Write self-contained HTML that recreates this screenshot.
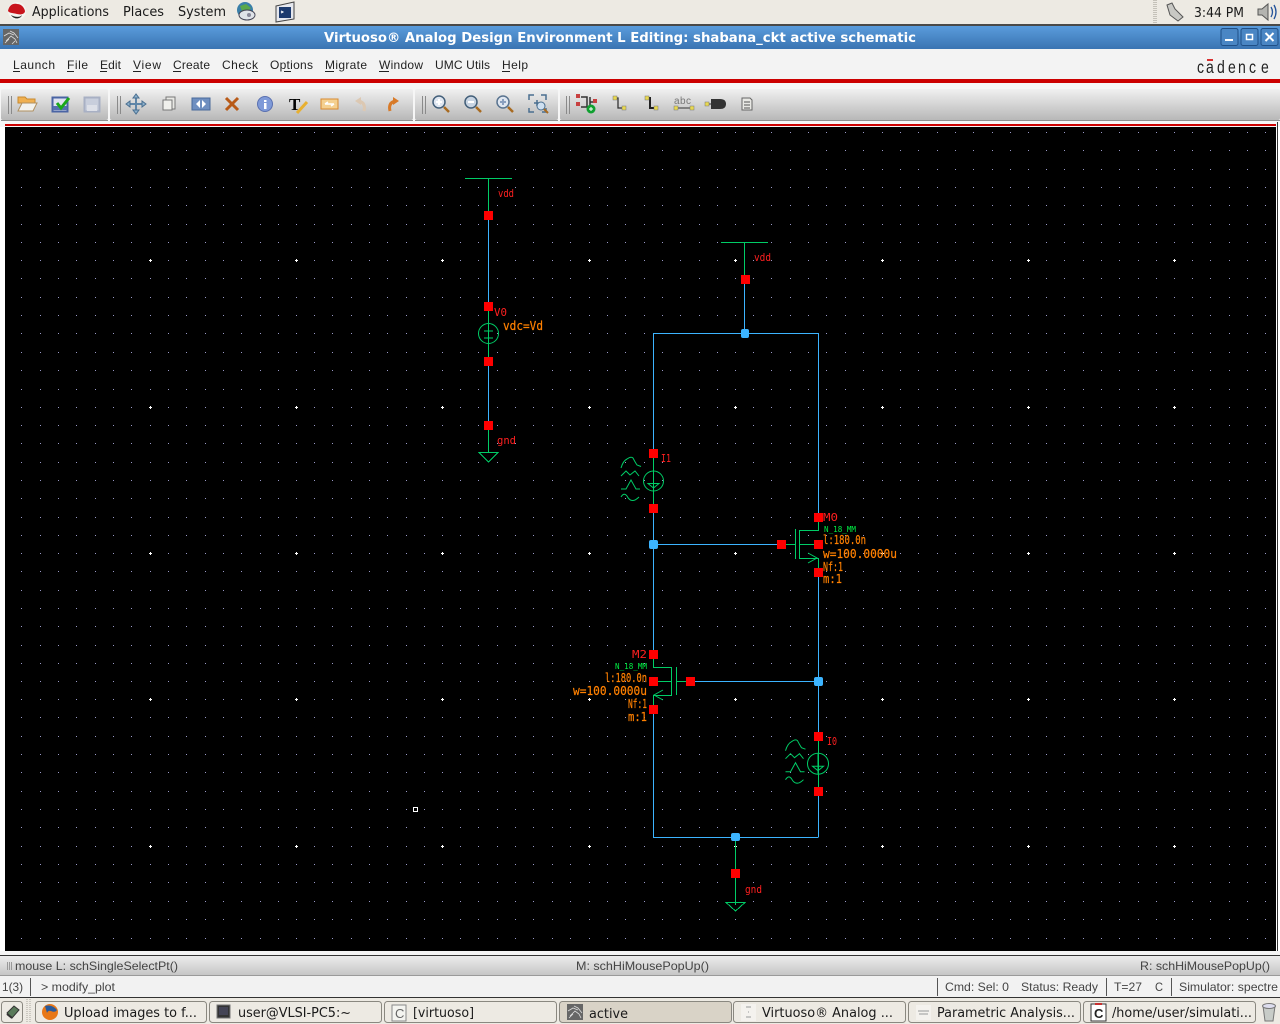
<!DOCTYPE html>
<html><head><meta charset="utf-8"><title>Virtuoso</title>
<style>
html,body{margin:0;padding:0;background:#fff;width:1280px;height:1024px;overflow:hidden}
svg{display:block}
.ui{font-family:"DejaVu Sans",sans-serif;font-size:13px;fill:#1a1a1a}
.mn{font-family:"Liberation Sans",sans-serif;font-size:12px;fill:#222}
.st{font-family:"Liberation Sans",sans-serif;font-size:12px;fill:#444}
.v{font-family:"DejaVu Sans Mono",monospace;font-size:11px}
.r{fill:#ff2020}.o{fill:#ff8000;font-size:12px;stroke:#ff8000;stroke-width:.2}.g{fill:#00ee44}
.w{stroke:#3cb4ff;fill:none;stroke-width:1}
.n{stroke:#00cc66;fill:none;stroke-width:1}
.tb{fill:url(#tbg)}
.btn{fill:#edeae3;stroke:#8a8880;stroke-width:1}
</style></head><body>
<svg width="1280" height="1024" viewBox="0 0 1280 1024" xmlns="http://www.w3.org/2000/svg">
<defs>
<linearGradient id="tt" x1="0" y1="0" x2="0" y2="1"><stop offset="0" stop-color="#5a9cdc"/><stop offset="1" stop-color="#3a74b2"/></linearGradient>
<linearGradient id="tbg" x1="0" y1="0" x2="0" y2="1"><stop offset="0" stop-color="#f0f0f0"/><stop offset="1" stop-color="#b8b8b8"/></linearGradient>
<linearGradient id="sbg" x1="0" y1="0" x2="0" y2="1"><stop offset="0" stop-color="#ececec"/><stop offset="1" stop-color="#c4c4c4"/></linearGradient>
<clipPath id="cols"><path d="M21 127h1v824h-1zM40 127h1v824h-1zM58 127h1v824h-1zM76 127h1v824h-1zM95 127h1v824h-1zM113 127h1v824h-1zM131 127h1v824h-1zM150 127h1v824h-1zM168 127h1v824h-1zM186 127h1v824h-1zM205 127h1v824h-1zM223 127h1v824h-1zM241 127h1v824h-1zM260 127h1v824h-1zM278 127h1v824h-1zM296 127h1v824h-1zM314 127h1v824h-1zM332 127h1v824h-1zM351 127h1v824h-1zM369 127h1v824h-1zM387 127h1v824h-1zM406 127h1v824h-1zM424 127h1v824h-1zM442 127h1v824h-1zM460 127h1v824h-1zM478 127h1v824h-1zM497 127h1v824h-1zM515 127h1v824h-1zM533 127h1v824h-1zM552 127h1v824h-1zM570 127h1v824h-1zM589 127h1v824h-1zM607 127h1v824h-1zM625 127h1v824h-1zM644 127h1v824h-1zM662 127h1v824h-1zM680 127h1v824h-1zM699 127h1v824h-1zM717 127h1v824h-1zM735 127h1v824h-1zM753 127h1v824h-1zM771 127h1v824h-1zM790 127h1v824h-1zM808 127h1v824h-1zM826 127h1v824h-1zM845 127h1v824h-1zM863 127h1v824h-1zM882 127h1v824h-1zM900 127h1v824h-1zM918 127h1v824h-1zM937 127h1v824h-1zM955 127h1v824h-1zM973 127h1v824h-1zM992 127h1v824h-1zM1010 127h1v824h-1zM1028 127h1v824h-1zM1046 127h1v824h-1zM1064 127h1v824h-1zM1083 127h1v824h-1zM1101 127h1v824h-1zM1119 127h1v824h-1zM1138 127h1v824h-1zM1156 127h1v824h-1zM1174 127h1v824h-1zM1192 127h1v824h-1zM1210 127h1v824h-1zM1229 127h1v824h-1zM1247 127h1v824h-1zM1265 127h1v824h-1z"/></clipPath>
<clipPath id="majc"><path d="M149 127h3v824h-3zM295 127h3v824h-3zM441 127h3v824h-3zM588 127h3v824h-3zM734 127h3v824h-3zM881 127h3v824h-3zM1027 127h3v824h-3zM1173 127h3v824h-3z"/></clipPath>
<clipPath id="majr"><path d="M5 259h1271v3H5zM5 406h1271v3H5zM5 552h1271v3H5zM5 698h1271v3H5zM5 845h1271v3H5z"/></clipPath>
</defs>

<!-- top panel -->
<rect width="1280" height="24" fill="#edeae3"/>
<rect y="24" width="1280" height="2" fill="#4a4a48"/>
<circle cx="17" cy="11" r="9" fill="#f4f4f0"/>
<path d="M8 11C9 6 12 3 17 4C21 4 24 7 25 11C25 14 21 15 17 14C13 13 9 13 8 11Z" fill="#c8141c"/>
<path d="M11 15C14 17 20 18 22 15C21 19 14 20 11 15Z" fill="#222"/>
<text class="ui" x="32" y="16" textLength="77" lengthAdjust="spacingAndGlyphs">Applications</text>
<text class="ui" x="123" y="16" textLength="41" lengthAdjust="spacingAndGlyphs">Places</text>
<text class="ui" x="178" y="16" textLength="48" lengthAdjust="spacingAndGlyphs">System</text>
<circle cx="245" cy="10" r="8" fill="#3a7fa8"/><path d="M240 6l6-2 5 4-4 4-5-1z" fill="#5aa84a"/>
<ellipse cx="247" cy="15" rx="8" ry="5" fill="#dfe3e8" stroke="#445" stroke-width="1"/><circle cx="249" cy="15" r="2" fill="#889"/>
<path d="M276 6L294 2V19L276 22Z" fill="#e6e8ee" stroke="#444"/><rect x="279" y="7" width="12" height="11" fill="#1c3a6e"/><path d="M281 11l2 1-2 1" stroke="#fff" fill="none"/>
<path d="M1154 0V24M1156 0V24" stroke="#9a988f" stroke-dasharray="1 1"/>
<path d="M1167 5L1172 3L1175 9L1183 17L1178 21L1170 15Z" fill="#c8c8c4" stroke="#555"/>
<text class="ui" x="1194" y="17" textLength="50" lengthAdjust="spacingAndGlyphs">3:44 PM</text>
<path d="M1258 9H1262L1268 4V20L1262 15H1258Z" fill="#b4b4b0" stroke="#555"/>
<path d="M1271 7Q1274 12 1271 17M1274 5Q1278 12 1274 19" stroke="#24539a" fill="none" stroke-width="1.3"/>

<!-- title bar -->
<rect y="26" width="1280" height="23" fill="url(#tt)"/>
<rect x="3" y="29" width="16" height="16" fill="#666"/>
<path d="M4 36L9 33L14 35M6 41L11 36L15 39L17 43M5 43L9 39M10 31L14 33L18 38M12 44L15 41" stroke="#ddd" fill="none" stroke-width=".8"/>
<text x="324" y="42" font-family="DejaVu Sans,sans-serif" font-weight="bold" font-size="13" fill="#fff" textLength="592" lengthAdjust="spacingAndGlyphs">Virtuoso® Analog Design Environment L Editing: shabana_ckt active schematic</text>
<g fill="#4a86c4" stroke="#1f4f86"><rect x="1221" y="28.5" width="17" height="17" rx="2"/><rect x="1241" y="28.5" width="17" height="17" rx="2"/><rect x="1261" y="28.5" width="17" height="17" rx="2"/></g>
<rect x="1225" y="39" width="8" height="2" fill="#fff"/>
<rect x="1246.5" y="34.5" width="6" height="5" fill="none" stroke="#fff" stroke-width="1.5"/>
<path d="M1265.5 33L1273.5 41M1273.5 33L1265.5 41" stroke="#fff" stroke-width="2"/>

<!-- menu bar -->
<rect y="49" width="1280" height="30" fill="#f3f3f3"/>
<rect y="79" width="1280" height="4" fill="#cc0000"/>
<rect y="83" width="1280" height="44" fill="#f6f6f6"/>
<text class="mn" x="13" y="69" textLength="42">Launch</text>
<text class="mn" x="67" y="69" textLength="21">File</text>
<text class="mn" x="100" y="69" textLength="21">Edit</text>
<text class="mn" x="133" y="69" textLength="28">View</text>
<text class="mn" x="173" y="69" textLength="37">Create</text>
<text class="mn" x="222" y="69" textLength="36">Check</text>
<text class="mn" x="270" y="69" textLength="43">Options</text>
<text class="mn" x="325" y="69" textLength="42">Migrate</text>
<text class="mn" x="379" y="69" textLength="44">Window</text>
<text class="mn" x="435" y="69" textLength="55">UMC Utils</text>
<text class="mn" x="502" y="69" textLength="26">Help</text>
<path d="M13 71.5h7M67 71.5h7M100 71.5h7M133 71.5h8M173 71.5h8M252 71.5h6M284 71.5h7M325 71.5h9M379 71.5h10M502 71.5h8" stroke="#222"/>
<text transform="translate(1197,73) scale(.78,1)" x="0 11.5 25.6 39.7 52.6 66.7 82" y="0" font-family="Liberation Sans,sans-serif" font-size="18" fill="#222">cadence</text>
<rect x="1207" y="59" width="6" height="2" fill="#d83030"/>

<!-- toolbar -->
<rect x="1" y="89" width="107" height="31" rx="2" class="tb"/>
<rect x="110" y="89" width="303" height="31" rx="2" class="tb"/>
<rect x="415" y="89" width="143" height="31" rx="2" class="tb"/>
<rect x="560" y="89" width="720" height="31" rx="2" class="tb"/>
<path d="M1 120.500H108M110 120.500H413M415 120.500H558M560 120.500H1280" stroke="#8e8e8e"/>
<path d="M8.5 96V114M11.5 96V114M117.5 96V114M120.5 96V114M422.5 96V114M425.500 96V114M566.500 96V114M569.500 96V114" stroke="#8a8a8a"/>

<!-- toolbar icons -->
<path d="M18 97H25L27 99H35V103H18Z" fill="#f0b050" stroke="#c88a30"/><path d="M18 111L22 103H37L33 111Z" fill="#f2f2ee" stroke="#b09060"/>
<rect x="52.500" y="97.500" width="15" height="14" fill="#dfe2f0" stroke="#4a64a4" stroke-width="2"/><path d="M53 108h14" stroke="#5570b0" stroke-width="4"/><path d="M57 103L61 108L69 98" stroke="#1aa81a" stroke-width="3" fill="none"/>
<rect x="84.500" y="97.500" width="15" height="14" fill="#c8cedc" stroke="#a8b0c4" stroke-width="2"/><rect x="87" y="105" width="10" height="6" fill="#dde0e8"/>
<path d="M136 95V113M127 104H145" stroke="#5f86a8" stroke-width="2"/><path d="M136 94l-3 4h6zM136 114l-3-4h6zM126 104l4-3v6zM146 104l-4-3v6z" fill="#8cb0cc" stroke="#4a6f90"/>
<rect x="166" y="97" width="9" height="12" fill="#e8e8e4" stroke="#777"/><rect x="163" y="100" width="9" height="10" fill="#f0f0ec" stroke="#777"/>
<rect x="192" y="98" width="18" height="12" fill="#6f8fc0" stroke="#4a6a9a"/><path d="M200 100l-4 4 4 4zM202 100l4 4-4 4z" fill="#fff"/>
<path d="M226 98L238 110M238 98L226 110" stroke="#b85a18" stroke-width="3"/>
<circle cx="265" cy="104" r="7.5" fill="#7f9ad8" stroke="#5a70b0"/><rect x="264" y="103" width="2.5" height="6" fill="#fff"/><rect x="264" y="100" width="2.5" height="2" fill="#fff"/>
<text x="289" y="110" font-family="Liberation Serif,serif" font-weight="bold" font-size="17" fill="#000">T</text><path d="M297 113L307 102" stroke="#e8b030" stroke-width="3"/>
<rect x="321" y="99" width="17" height="10" fill="#f4d090" stroke="#d88a30"/><path d="M325 104h9M325 104l3-2M334 104l-3 2" stroke="#fff" stroke-width="1.5" fill="none"/>
<path d="M364 111Q366 103 359 101" stroke="#dcc8b2" stroke-width="3" fill="none"/><path d="M361 97L355 101L361 105Z" fill="#dcc8b2"/>
<path d="M390 111Q388 103 395 101" stroke="#d87a28" stroke-width="3" fill="none"/><path d="M393 97L399 101L393 105Z" fill="#d87a28"/>
<g><circle cx="439" cy="102" r="6" fill="#dfe6f0" stroke="#44607a" stroke-width="1.5"/><path d="M436 102h6M439 99v6" stroke="#fff" stroke-width="2"/><path d="M444 107L449 112" stroke="#a86a20" stroke-width="2.5"/></g>
<g><circle cx="471" cy="102" r="6" fill="#c8d4e2" stroke="#44607a" stroke-width="1.5"/><path d="M468 102h6" stroke="#fff" stroke-width="2"/><path d="M476 107L481 112" stroke="#a86a20" stroke-width="2.5"/></g>
<g><circle cx="503" cy="102" r="6" fill="#dfe6f0" stroke="#5a7490" stroke-width="1.5"/><path d="M500 102h6M503 99v6" stroke="#8aa0c0" stroke-width="2"/><path d="M508 107L513 112" stroke="#a86a20" stroke-width="2.5"/></g>
<g fill="none" stroke="#4a6f90" stroke-width="1.5"><path d="M529 100V95H534M541 95H546V100M546 108V112H542M534 112H529V108M537 100V106M534 103H540"/></g><circle cx="541" cy="106" r="4" fill="#cfe0f0" stroke="#4a6f90"/><path d="M544 109L548 113" stroke="#a86a20" stroke-width="2"/>
<path d="M581 97H587V107H581M590 97V107M590 102H596" stroke="#333" stroke-width="1.5" fill="none"/><rect x="576" y="94" width="4" height="4" fill="#c84040"/><rect x="576" y="102" width="4" height="4" fill="#c84040"/><rect x="593" y="99" width="4" height="4" fill="#c84040"/><circle cx="591" cy="109" r="4.5" fill="#10a030"/><path d="M589 109h4M591 107v4" stroke="#fff"/>
<path d="M615 98H618V108H623" stroke="#333" fill="none" stroke-width="1.3"/><rect x="613" y="96" width="4" height="4" fill="#e8d850" stroke="#777" stroke-width=".5"/><rect x="622" y="106" width="4" height="4" fill="#e8d850" stroke="#777" stroke-width=".5"/>
<path d="M647 98H650V108H656" stroke="#222" fill="none" stroke-width="2"/><rect x="645" y="96" width="4" height="4" fill="#e8d850" stroke="#777" stroke-width=".5"/><rect x="654" y="106" width="4" height="4" fill="#e8d850" stroke="#777" stroke-width=".5"/>
<text x="674" y="104" font-family="Liberation Sans,sans-serif" font-size="10" fill="#777" textLength="17">abc</text><path d="M676 108H692" stroke="#333"/><rect x="674" y="106" width="4" height="4" fill="#e8d850" stroke="#777" stroke-width=".5"/><rect x="690" y="106" width="4" height="4" fill="#e8d850" stroke="#777" stroke-width=".5"/>
<path d="M711 99H720Q726 99 726 104Q726 109 720 109H711Z" fill="#333"/><path d="M706 104H712" stroke="#333"/><rect x="705" y="102" width="4" height="4" fill="#e8d850" stroke="#777" stroke-width=".5"/>
<path d="M742 98H750L752 100V110H742Z" fill="#e8e8e4" stroke="#666"/><path d="M744 102h6M744 105h6M744 108h6" stroke="#555"/>

<!-- canvas -->
<rect x="5" y="124" width="1271" height="2" fill="#cc0000"/>
<rect x="5" y="127" width="1271" height="824" fill="#000"/>
<rect x="1277" y="122" width="1" height="830" fill="#333"/>

<!-- grid -->
<path clip-path="url(#cols)" stroke="#9a9ac8" fill="none" d="M5 132.500H1276M5 150.500H1276M5 169.500H1276M5 187.500H1276M5 205.500H1276M5 224.500H1276M5 242.500H1276M5 260.500H1276M5 278.500H1276M5 297.500H1276M5 315.500H1276M5 333.500H1276M5 352.500H1276M5 370.500H1276M5 389.500H1276M5 407.500H1276M5 425.500H1276M5 443.500H1276M5 462.500H1276M5 480.500H1276M5 498.500H1276M5 517.500H1276M5 535.500H1276M5 553.500H1276M5 571.500H1276M5 590.500H1276M5 608.500H1276M5 626.500H1276M5 645.500H1276M5 663.500H1276M5 681.500H1276M5 699.500H1276M5 717.500H1276M5 736.500H1276M5 754.500H1276M5 772.500H1276M5 791.500H1276M5 809.500H1276M5 827.500H1276M5 846.500H1276M5 864.500H1276M5 882.500H1276M5 901.500H1276M5 919.500H1276M5 938.500H1276"/>
<path clip-path="url(#majc)" stroke="#fff" fill="none" d="M5 260.500H1276M5 407.500H1276M5 553.500H1276M5 699.500H1276M5 846.500H1276"/>
<path clip-path="url(#majr)" stroke="#fff" fill="none" d="M150.500 127V951M296.500 127V951M442.500 127V951M589.500 127V951M735.500 127V951M882.500 127V951M1028.500 127V951M1174.500 127V951"/>
<rect x="413.5" y="807.5" width="4" height="4" fill="none" stroke="#fff"/>

<!-- left branch -->
<g shape-rendering="crispEdges">
<path class="n" d="M465 178.5H512M488.5 178V215M488.5 307V361M488.5 425V452"/>
<path class="w" d="M488.5 215V307M488.5 361V425"/>
<path class="n" d="M479 452.5H498L488.5 462Z"/>
<path class="n" d="M721 242.5H768M744.5 242V279"/>
<path class="w" d="M744.5 279V333M653.5 333.5H818.5M653.5 333V453M653.5 508V654M653.5 544.5H781M818.5 333V518M818.5 572V736M818.5 791V837.5M690 681.5H818M653.5 709V837.5H818"/>
<path class="n" d="M653.5 453V508M781 544.5H796M795.5 529V559M799.5 530V558M799 530.5H818.5V518M799 544.5H818M799 558.5H818.5V572"/>
<path class="n" d="M653.5 654V667.5H672M671.5 667V695M672 681.5H653M672 695.5H653.5V709M676.5 667V695M676 681.5H690"/>
<path class="n" d="M818.5 736V791"/>
<path class="n" d="M735.5 837V905"/>
<path class="n" d="M726 902.5H745L735.5 911Z"/>
</g>
<circle cx="488.5" cy="333.5" r="10" fill="none" stroke="#00cc66"/>
<path class="n" d="M484 331h9M488.5 327v8M484 338h9"/>
<path class="n" d="M808 553L817 558L808 563"/>
<path class="n" d="M663 690L654 695L663 700"/>

<!-- current source I1 -->
<g>
<circle cx="653.5" cy="481" r="10" fill="none" stroke="#00cc66"/>
<path class="n" d="M648 483.5H659L653.5 488ZM653.5 471V491"/>
<path class="n" d="M621 468Q623 461 627 459Q631 456 633 458Q635 462 637 465L641 466.5M621 476L626 471L630 475L635 471L639 476M621 489H626L631 480L636 489H640M621 497Q624 492 627 496Q630 502 635 500Q637 499 639 497"/>
</g>
<g transform="translate(164.5,282.7)">
<circle cx="653.5" cy="481" r="10.5" fill="none" stroke="#00cc66"/>
<path class="n" d="M648 483.5H659L653.5 488ZM653.5 471V491"/>
<path class="n" d="M621 468Q623 461 627 459Q631 456 633 458Q635 462 637 465L641 466.5M621 476L626 471L630 475L635 471L639 476M621 489H626L631 480L636 489H640M621 497Q624 492 627 496Q630 502 635 500Q637 499 639 497"/>
</g>

<!-- nodes -->
<g fill="#3cb4ff"><rect x="741" y="329" width="8" height="9" rx="2"/><rect x="649" y="540" width="9" height="9" rx="2"/><rect x="814" y="677" width="9" height="9" rx="2"/><rect x="731" y="833" width="9" height="8" rx="2"/></g>
<g fill="#ff0000">
<rect x="484" y="211" width="9" height="9"/><rect x="484" y="302" width="9" height="9"/><rect x="484" y="357" width="9" height="9"/><rect x="484" y="421" width="9" height="9"/>
<rect x="741" y="275" width="9" height="9"/><rect x="649" y="449" width="9" height="9"/><rect x="649" y="504" width="9" height="9"/>
<rect x="814" y="513" width="9" height="9"/><rect x="814" y="540" width="9" height="9"/><rect x="814" y="568" width="9" height="9"/><rect x="777" y="540" width="9" height="9"/>
<rect x="649" y="650" width="9" height="9"/><rect x="649" y="677" width="9" height="9"/><rect x="649" y="705" width="9" height="9"/><rect x="686" y="677" width="9" height="9"/>
<rect x="814" y="732" width="9" height="9"/><rect x="814" y="787" width="9" height="9"/><rect x="731" y="869" width="9" height="9"/>
</g>

<!-- labels -->
<text class="v r" x="498" y="197" textLength="16" lengthAdjust="spacingAndGlyphs">vdd</text>
<text class="v r" x="494" y="316" textLength="13" lengthAdjust="spacingAndGlyphs">V0</text>
<text class="v o" x="503" y="330" textLength="40" lengthAdjust="spacingAndGlyphs">vdc=Vd</text>
<text class="v r" x="497" y="444" textLength="19" lengthAdjust="spacingAndGlyphs">gnd</text>
<text class="v r" x="754" y="261" textLength="17" lengthAdjust="spacingAndGlyphs">vdd</text>
<text class="v r" x="661" y="462" textLength="10" lengthAdjust="spacingAndGlyphs">I1</text>
<text class="v r" x="823" y="521" textLength="15" lengthAdjust="spacingAndGlyphs">M0</text>
<text class="v g" x="824" y="532" textLength="32" lengthAdjust="spacingAndGlyphs" style="font-size:8px">N_18_MM</text>
<text class="v o" x="823" y="544" textLength="43" lengthAdjust="spacingAndGlyphs">l:180.0n</text>
<text class="v o" x="823" y="558" textLength="74" lengthAdjust="spacingAndGlyphs">w=100.0000u</text>
<text class="v o" x="823" y="571" textLength="20" lengthAdjust="spacingAndGlyphs">Nf:1</text>
<text class="v o" x="823" y="583" textLength="19" lengthAdjust="spacingAndGlyphs">m:1</text>
<text class="v r" x="632" y="658" textLength="15" lengthAdjust="spacingAndGlyphs">M2</text>
<text class="v g" x="615" y="669" textLength="32" lengthAdjust="spacingAndGlyphs" style="font-size:8px">N_18_MM</text>
<text class="v o" x="605" y="682" textLength="42" lengthAdjust="spacingAndGlyphs">l:180.0n</text>
<text class="v o" x="573" y="695" textLength="74" lengthAdjust="spacingAndGlyphs">w=100.0000u</text>
<text class="v o" x="628" y="708" textLength="19" lengthAdjust="spacingAndGlyphs">Nf:1</text>
<text class="v o" x="628" y="721" textLength="19" lengthAdjust="spacingAndGlyphs">m:1</text>
<text class="v r" x="827" y="745" textLength="10" lengthAdjust="spacingAndGlyphs">I0</text>
<text class="v r" x="745" y="893" textLength="17" lengthAdjust="spacingAndGlyphs">gnd</text>

<!-- status -->
<rect y="951" width="1280" height="4" fill="#f4f4f4"/>
<rect y="955" width="1280" height="1" fill="#333"/>
<rect y="956" width="1280" height="20" fill="url(#sbg)"/>
<rect y="975" width="1280" height="1" fill="#9a9a9a"/>
<rect y="976" width="1280" height="21" fill="#f2f2f2"/>
<rect y="997" width="1280" height="1" fill="#333"/>
<path d="M7.500 962V970M9.500 962V970M11.500 962V970" stroke="#999"/>
<text class="st" x="15" y="970" textLength="163" lengthAdjust="spacingAndGlyphs">mouse L: schSingleSelectPt()</text>
<text class="st" x="576" y="970" textLength="133" lengthAdjust="spacingAndGlyphs">M: schHiMousePopUp()</text>
<text class="st" x="1140" y="970" textLength="130" lengthAdjust="spacingAndGlyphs">R: schHiMousePopUp()</text>
<text class="st" x="2" y="991" textLength="21" lengthAdjust="spacingAndGlyphs">1(3)</text>
<path d="M30.500 978V996M937.500 978V996M1106.500 978V996M1171.500 978V996" stroke="#555"/>
<text class="st" x="41" y="991" textLength="74" lengthAdjust="spacingAndGlyphs">&gt; modify_plot</text>
<text class="st" x="945" y="991" textLength="64" lengthAdjust="spacingAndGlyphs">Cmd: Sel: 0</text>
<text class="st" x="1021" y="991" textLength="77" lengthAdjust="spacingAndGlyphs">Status: Ready</text>
<text class="st" x="1114" y="991" textLength="28" lengthAdjust="spacingAndGlyphs">T=27</text>
<text class="st" x="1155" y="991" textLength="8" lengthAdjust="spacingAndGlyphs">C</text>
<text class="st" x="1179" y="991" textLength="99" lengthAdjust="spacingAndGlyphs">Simulator: spectre</text>

<!-- taskbar -->
<rect y="998" width="1280" height="26" fill="#edeae3"/>
<rect x="1.500" y="1001.500" width="21" height="21" rx="3" class="btn"/>
<path d="M7 1013L14 1006L19 1010L12 1018Z" fill="#5a7a5a" stroke="#333"/><path d="M7 1014L12 1018" stroke="#333" stroke-width="2"/>
<path d="M27 999V1023M30 999V1023" stroke="#a9a69c" stroke-dasharray="1 1"/>
<rect x="35.500" y="1001.500" width="171" height="21" rx="3" class="btn"/>
<rect x="209.500" y="1001.500" width="172" height="21" rx="3" class="btn"/>
<rect x="384.500" y="1001.500" width="172" height="21" rx="3" class="btn"/>
<rect x="559.500" y="1001.500" width="172" height="21" rx="3" fill="#d9d3c7" stroke="#8a8880"/>
<rect x="733.500" y="1001.500" width="172" height="21" rx="3" class="btn"/>
<rect x="908.500" y="1001.500" width="172" height="21" rx="3" class="btn"/>
<rect x="1083.500" y="1001.500" width="172" height="21" rx="3" class="btn"/>
<circle cx="50" cy="1012" r="8" fill="#e87818"/><path d="M45 1006Q52 1004 57 1010Q55 1013 51 1011Q48 1010 47 1013Z" fill="#2a5a9a"/>
<rect x="217" y="1005" width="13" height="13" fill="#333" stroke="#777"/><rect x="219" y="1007" width="9" height="8" fill="#445"/>
<rect x="392" y="1005" width="14" height="16" fill="#f4f4f0" stroke="#888"/><text x="395" y="1018" font-family="Liberation Sans,sans-serif" font-size="13" fill="#666">C</text>
<rect x="567" y="1004" width="16" height="16" fill="#666"/><path d="M568 1011L573 1008L578 1010M570 1016L575 1011L579 1014L581 1018M569 1018L573 1014M574 1006L578 1008L582 1013" stroke="#ddd" fill="none" stroke-width=".8"/>
<rect x="741" y="1004" width="15" height="17" fill="#f4f2ee"/><path d="M746 1007h5M748 1012h1M746 1017h5" stroke="#999"/>
<rect x="916" y="1005" width="15" height="15" fill="#f4f2ee"/><path d="M918 1011h11M919 1014h9" stroke="#999"/>
<rect x="1091" y="1004" width="15" height="17" fill="#fff" stroke="#333"/><rect x="1095" y="1003" width="7" height="2" fill="#c83030"/><text x="1094" y="1018" font-family="Liberation Sans,sans-serif" font-weight="bold" font-size="13" fill="#222">C</text>
<path d="M1263 1006H1275L1273 1021H1265Z" fill="#c8ccc8" stroke="#777"/><ellipse cx="1269" cy="1006" rx="6.500" ry="2.500" fill="#dde" stroke="#777"/>
<text class="ui" x="64" y="1017" textLength="133" lengthAdjust="spacingAndGlyphs">Upload images to f...</text>
<text class="ui" x="238" y="1017" textLength="113" lengthAdjust="spacingAndGlyphs">user@VLSI-PC5:~</text>
<text class="ui" x="413" y="1017" textLength="61" lengthAdjust="spacingAndGlyphs">[virtuoso]</text>
<text class="ui" x="589" y="1018" textLength="39" lengthAdjust="spacingAndGlyphs">active</text>
<text class="ui" x="762" y="1017" textLength="131" lengthAdjust="spacingAndGlyphs">Virtuoso® Analog ...</text>
<text class="ui" x="937" y="1017" textLength="138" lengthAdjust="spacingAndGlyphs">Parametric Analysis...</text>
<text class="ui" x="1112" y="1017" textLength="140" lengthAdjust="spacingAndGlyphs">/home/user/simulati...</text>
</svg>
</body></html>
